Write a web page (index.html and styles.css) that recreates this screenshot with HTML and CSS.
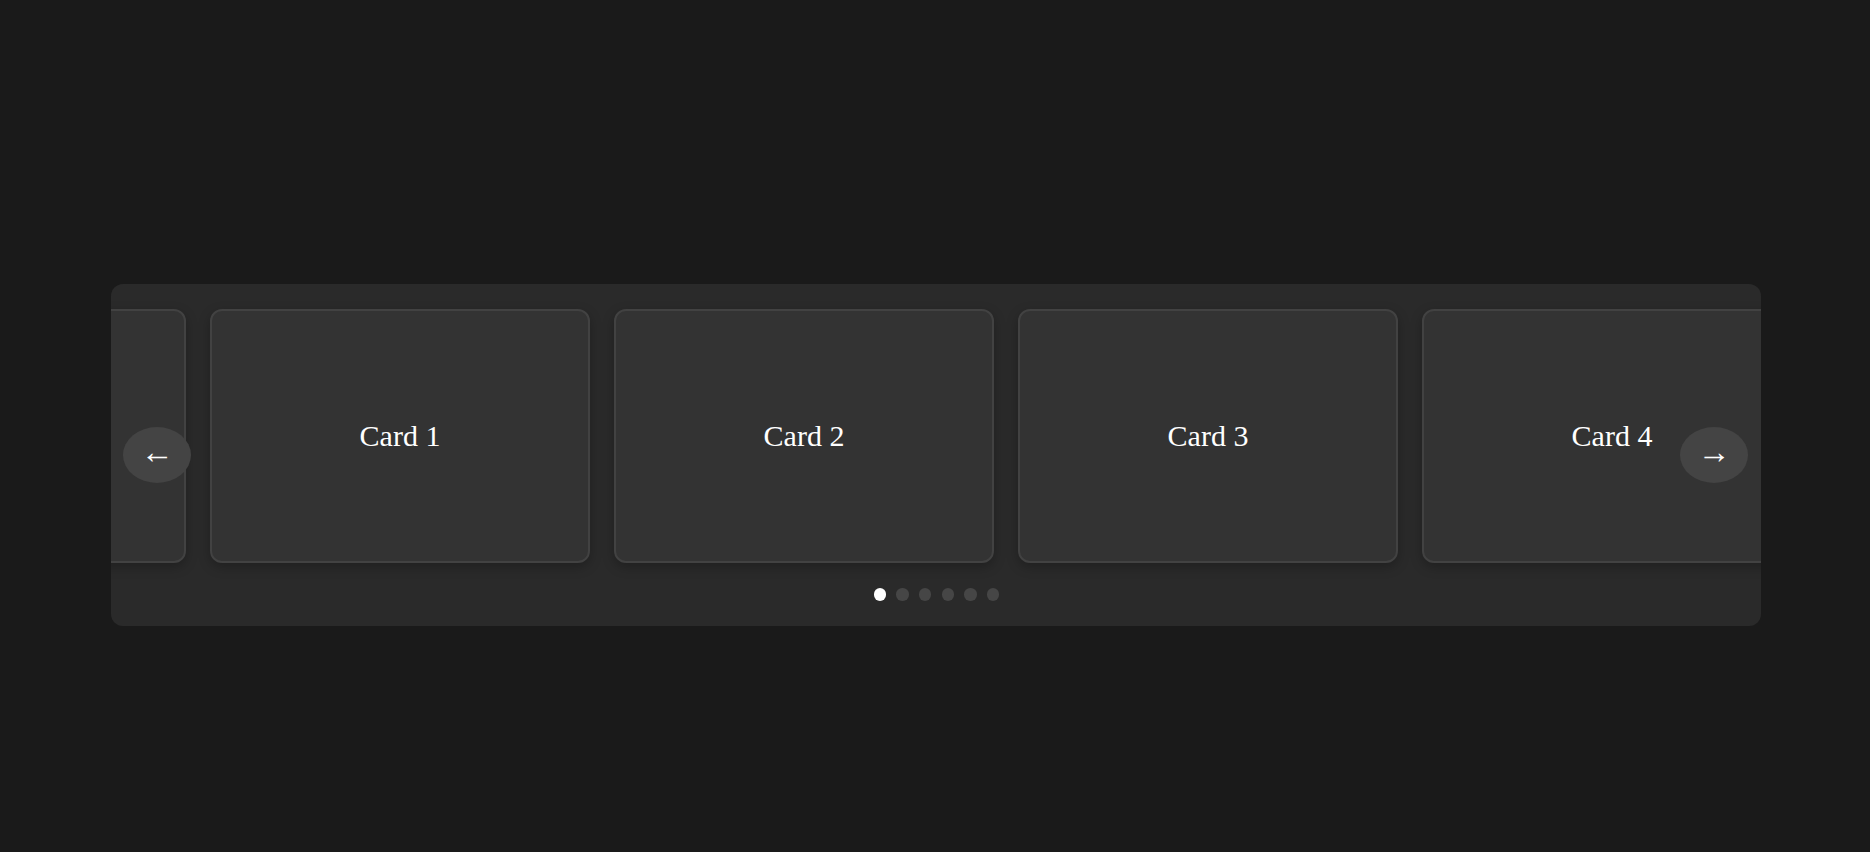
FILE: index.html
```html
<!DOCTYPE html>
<html lang="en">
<head>
<meta charset="utf-8">
<title>Carousel</title>
<link rel="stylesheet" href="styles.css">
</head>
<body>
<div class="page">
  <div class="carousel">
    <div class="viewport">
      <div class="track">
        <div class="card clone" aria-hidden="true"></div>
        <div class="card">Card 1</div>
        <div class="card">Card 2</div>
        <div class="card">Card 3</div>
        <div class="card">Card 4</div>
        <div class="card clone" aria-hidden="true"></div>
      </div>
    </div>
    <div class="dots">
      <span class="dot active"></span>
      <span class="dot"></span>
      <span class="dot"></span>
      <span class="dot"></span>
      <span class="dot"></span>
      <span class="dot"></span>
    </div>
    <button class="nav prev" type="button">&larr;</button>
    <button class="nav next" type="button">&rarr;</button>
  </div>
</div>
</body>
</html>
```

FILE: styles.css
```css
html, body {
  margin: 0;
  padding: 0;
  background: #1a1a1a;
  font-family: "Liberation Serif", "Times New Roman", serif;
  color: #fff;
}

.page {
  height: 852px;
  padding-top: 284px;
  box-sizing: border-box;
}

.carousel {
  position: relative;
  width: 1650px;
  margin: 0 0 0 111px;
  background: #2a2a2a;
  border-radius: 12px;
  padding: 25px 0 25px;
  box-sizing: border-box;
  overflow: hidden;
}

.track {
  display: flex;
  gap: 24px;
  transform: translateX(-305px);
}

.card {
  flex: 0 0 380px;
  height: 254px;
  box-sizing: border-box;
  background: #333333;
  border: 2px solid #424242;
  border-radius: 12px;
  box-shadow: 0 4px 12px rgba(0, 0, 0, 0.25);
  display: flex;
  align-items: center;
  justify-content: center;
  font-size: 30px;
  color: #ffffff;
}

.dots {
  display: flex;
  justify-content: center;
  gap: 10.1px;
  margin-top: 25px;
  padding-left: 1px;
}

.dot {
  width: 12.5px;
  height: 12.5px;
  border-radius: 50%;
  background: #464646;
}

.dot.active {
  background: #ffffff;
}

.nav {
  position: absolute;
  top: 50%;
  transform: translateY(-50%);
  width: 68px;
  height: 56px;
  border: none;
  border-radius: 50%;
  background: #444444;
  color: #ffffff;
  font-family: "Liberation Serif", "DejaVu Serif", serif;
  font-size: 33px;
  line-height: 1;
  padding: 0 0 5px;
  box-sizing: border-box;
  display: flex;
  align-items: center;
  justify-content: center;
  cursor: pointer;
}

.prev {
  left: 12px;
}

.next {
  right: 13px;
}
```
